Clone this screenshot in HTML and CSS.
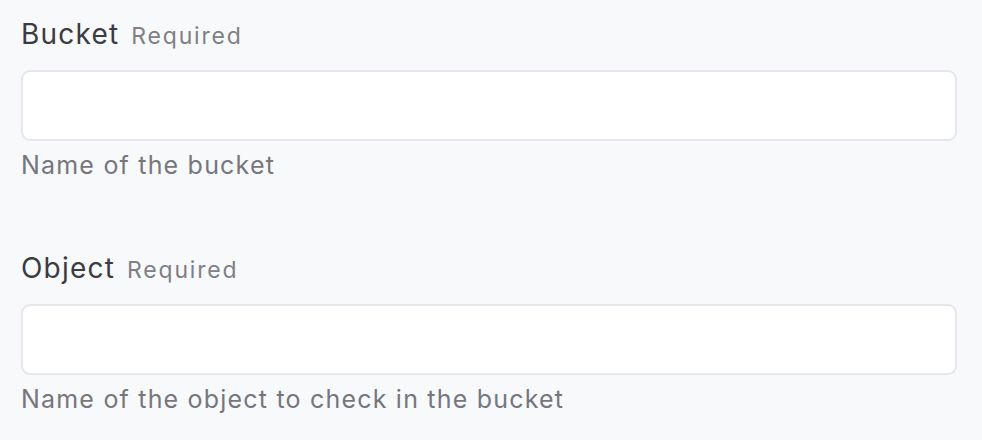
FILE: index.html
```html
<!DOCTYPE html>
<html>
<head>
<meta charset="utf-8">
<link rel="stylesheet" href="styles.css">
</head>
<body>
<div class="form">
  <div class="field">
    <label class="label"><span class="name">Bucket</span><span class="req">Required</span></label>
    <input class="input" type="text">
    <div class="help">Name of the bucket</div>
  </div>
  <div class="field">
    <label class="label"><span class="name">Object</span><span class="req">Required</span></label>
    <input class="input" type="text">
    <div class="help">Name of the object to check in the bucket</div>
  </div>
</div>
</body>
</html>
```
FILE: styles.css
```css
html, body {
  margin: 0;
  padding: 0;
  background: #f8f9fb;
  font-family: Inter, "Noto Sans", sans-serif;
}
.form {
  padding: 17px 25px 0 21px;
  display: flex;
  flex-direction: column;
  gap: 69px;
}
.field {
  display: flex;
  flex-direction: column;
}
.label {
  display: block;
  font-size: 28px;
  line-height: 34px;
  white-space: nowrap;
}
.name {
  font-size: 28px;
  letter-spacing: 1.2px;
  color: #3b3b40;
}
.req {
  margin-left: 12px;
  font-size: 23px;
  letter-spacing: 1.8px;
  color: #7f7f85;
}
.input {
  box-sizing: border-box;
  margin: 17px 0 0 0;
  width: 936px;
  height: 71px;
  border: 2px solid #e6e6ec;
  border-radius: 9px;
  background: #ffffff;
  outline: none;
}
.help {
  margin-top: 7px;
  font-size: 25px;
  line-height: 34px;
  letter-spacing: 1.2px;
  color: #76767c;
}
```
